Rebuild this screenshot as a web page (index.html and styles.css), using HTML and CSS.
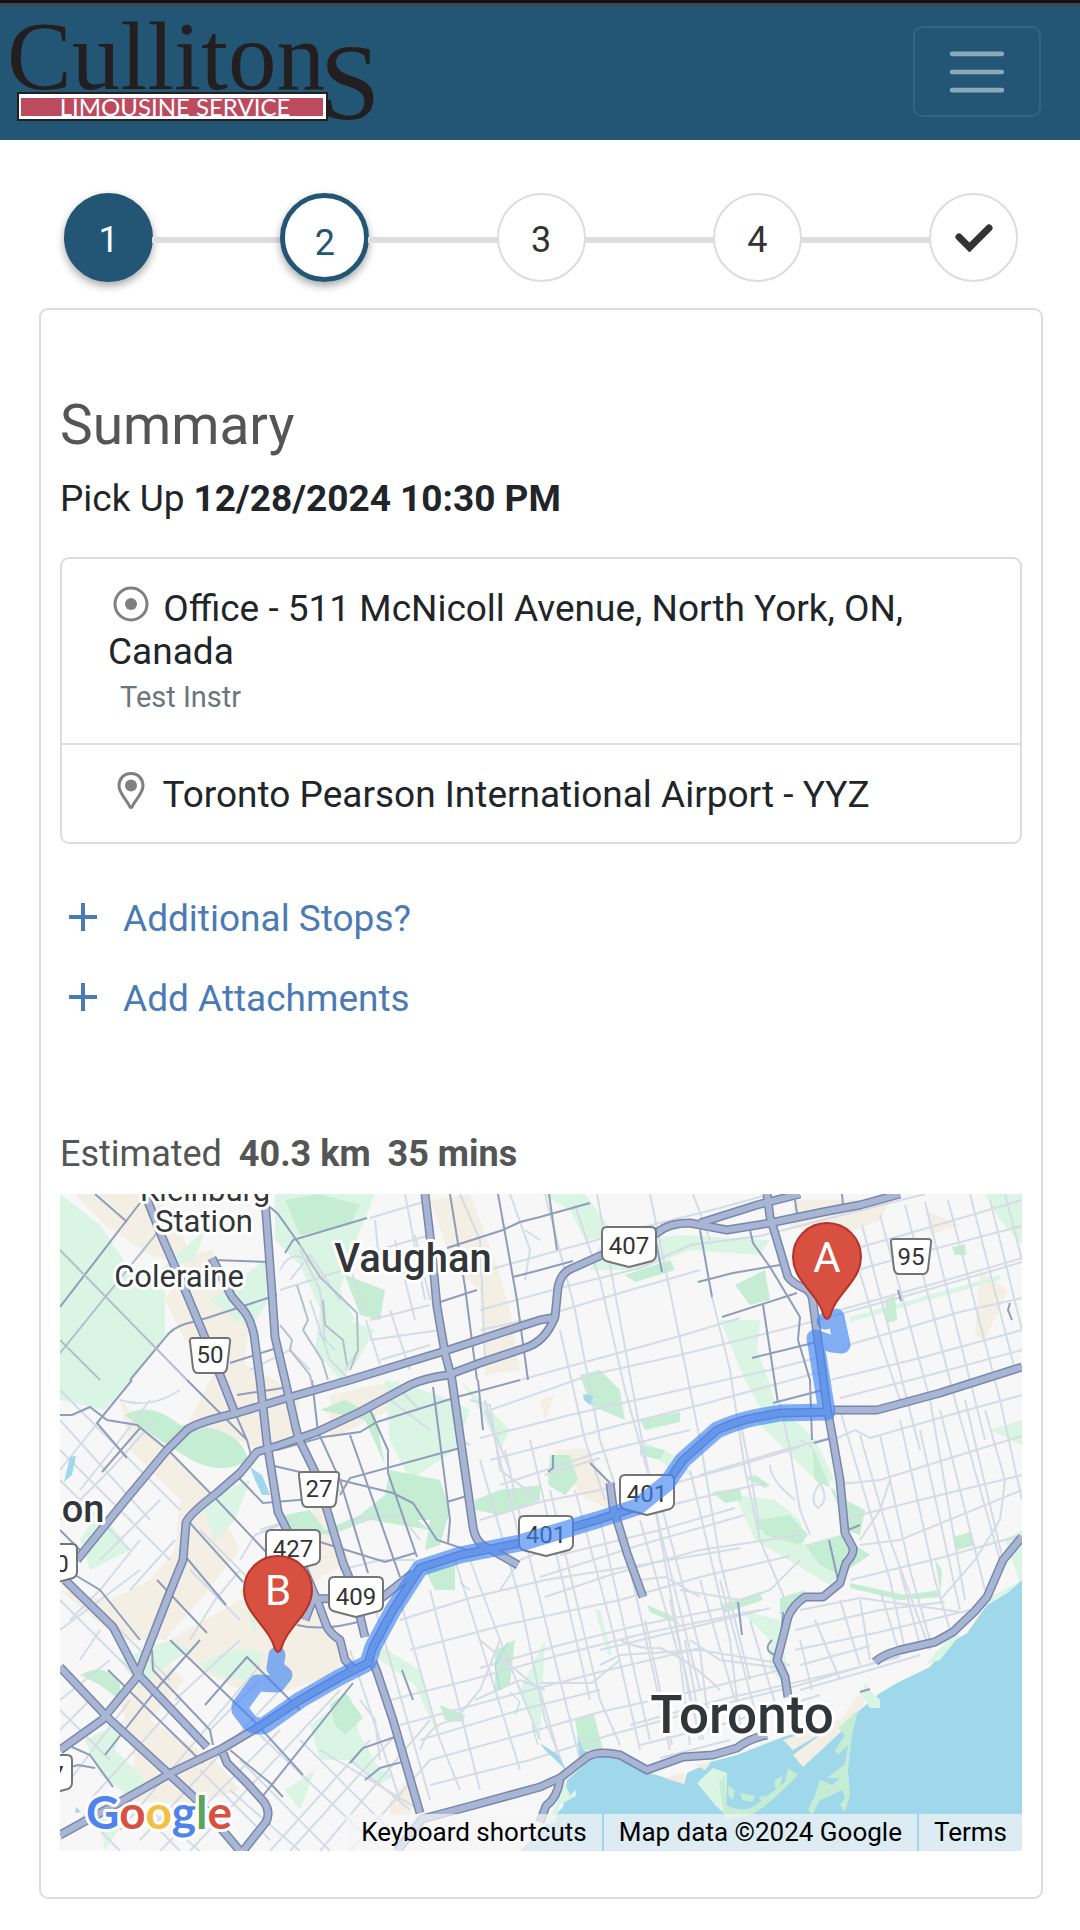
FILE: index.html
```html
<!DOCTYPE html>
<html lang="en">
<head>
  <meta charset="UTF-8">
  <meta name="viewport" content="width=device-width, initial-scale=1.0">
  <title>Cullitons Limousine Service</title>
  <link rel="stylesheet" href="styles.css">
</head>
<body>
  <header class="navbar">
    <a href="#" class="brand">
      <svg width="384" height="112" viewBox="0 15 384 112">
        <text class="logo-name" x="7" y="88">Culliton<tspan class="logo-s" x="320" y="118">S</tspan></text>
        <rect x="18" y="92" width="309" height="27" fill="#fff" stroke="#231f20" stroke-width="2"/>
        <rect x="21" y="97" width="302" height="18" fill="#bd4b5f"/>
        <text class="logo-tag" x="175" y="115" text-anchor="middle">LIMOUSINE SERVICE</text>
      </svg>
    </a>
    <button class="toggler" type="button" aria-label="Toggle navigation">
      <svg width="68" height="68" viewBox="0 0 30 30">
        <path d="M4 7h22M4 15h22M4 23h22" stroke="#8baab9" stroke-width="2" stroke-linecap="round"/>
      </svg>
    </button>
  </header>

  <nav class="steps">
    <a href="#" class="step done">1</a>
    <span class="line"></span>
    <a href="#" class="step current">2</a>
    <span class="line"></span>
    <a href="#" class="step">3</a>
    <span class="line"></span>
    <a href="#" class="step">4</a>
    <span class="line"></span>
    <a href="#" class="step" aria-label="Finish">
      <svg width="38" height="28" viewBox="0 0 38 28">
        <path d="M4 13L14.500 23.500L34 4" fill="none" stroke="#333" stroke-width="7" stroke-linejoin="miter" stroke-linecap="round"/>
      </svg>
    </a>
  </nav>

  <main class="card">
    <h1>Summary</h1>
    <p class="pickup">Pick Up <b>12/28/2024 10:30 PM</b></p>

    <ul class="stops">
      <li>
        <svg class="stop-icon" width="42" height="42" viewBox="0 0 42 42">
          <circle cx="21" cy="21" r="16" fill="none" stroke="#808080" stroke-width="3"/>
          <circle cx="21" cy="21" r="6" fill="#808080"/>
        </svg>
        Office - 511 McNicoll Avenue, North York, ON, Canada
        <small>Test Instr</small>
      </li>
      <li>
        <svg class="stop-icon" width="42" height="42" viewBox="0 0 42 42">
          <path d="M21 4.500C13.500 4.500 9 10 9 17C9 24 17 31.500 19.500 37C20.200 39 21.800 39 22.500 37C25 31.500 33 24 33 17C33 10 28.500 4.500 21 4.500Z" fill="none" stroke="#808080" stroke-width="3"/>
          <circle cx="21" cy="16.500" r="6" fill="#808080"/>
        </svg>
        Toronto Pearson International Airport - YYZ
      </li>
    </ul>

    <div class="actions">
      <a href="#">
        <svg width="28" height="28" viewBox="0 0 28 28"><path d="M14 0V28M0 14H28" stroke="#4a7bb5" stroke-width="4"/></svg>
        Additional Stops?
      </a>
      <a href="#">
        <svg width="28" height="28" viewBox="0 0 28 28"><path d="M14 0V28M0 14H28" stroke="#4a7bb5" stroke-width="4"/></svg>
        Add Attachments
      </a>
    </div>

    <p class="estimate">Estimated <b>40.3 km</b> <b>35 mins</b></p>

    <div class="map">
      <svg class="map-canvas" viewBox="60 1194 962 657">
        <defs>
          <path id="shield" d="M-22 -19H22Q27 -19 27 -14V9Q27 13 23 15Q12 18 0 21Q-12 18 -23 15Q-27 13 -27 9V-14Q-27 -19 -22 -19Z"/>
          <path id="plate" d="M-17 -17H17Q21 -17 20 -13L17 13Q16 18 12 18H-12Q-16 18 -17 13L-20 -13Q-21 -17 -17 -17Z"/>
          <path id="pin" d="M0 -96C-19 -96 -34 -81 -34 -62C-34 -38 -9 -26 -3 -3Q0 3 3 -3C9 -26 34 -38 34 -62C34 -81 19 -96 0 -96Z"/>
          <g id="highways">
            <path d="M145 1194L162 1237L185 1290L203 1333L222 1380L235 1413"/>
            <path d="M212 1258L232 1297L244 1311Q251 1320 254 1335L260 1380L267 1443L273 1480L278 1512L287 1530L317 1600L327 1627Q331 1634 340 1640L345 1660L352 1668"/>
            <path d="M265 1200L269 1253L273 1307L275 1337L285 1380L298 1437L315 1472L327 1510L343 1563L353 1587L365 1637"/>
            <path d="M60 1750L102 1720L137 1677L150 1643L168 1597L183 1560L186 1523Q188 1515 217 1493L240 1473L257 1452L280 1445L317 1432L360 1412L410 1385Q425 1378 448 1375L480 1363L525 1348Q545 1342 555 1317L558 1287Q561 1272 573 1268L602 1255L657 1233Q668 1223 690 1223L727 1230L770 1223L823 1212L860 1205L900 1194"/>
            <path d="M77 1560L123 1503L167 1450L187 1430Q195 1423 237 1413L287 1398L350 1380L448 1350L540 1320L552 1318"/>
            <path d="M65 1580L113 1627L137 1673L153 1690L207 1747"/>
            <path d="M223 1753L227 1763L247 1783L264 1802Q271 1812 266 1822L243 1851"/>
            <path d="M60 1667L108 1718L157 1763L197 1800L240 1851"/>
            <path d="M373 1662L377 1672L393 1720L420 1813M397 1851L422 1819L467 1807L540 1787L560 1778L587 1757Q598 1750 620 1755L647 1770L683 1757L713 1755L737 1748Q750 1738 767 1735M560 1780Q557 1798 546 1806L540 1822"/>
            <path d="M425 1194L432 1253L437 1307L445 1353L452 1380L463 1457L473 1527Q476 1545 490 1549L518 1565"/>
            <path d="M767 1194L770 1217L777 1240L788 1277Q793 1284 806 1289Q813 1294 813 1303L817 1333L827 1407L833 1440L840 1480L845 1533L853 1548Q854 1555 846 1563L840 1583L823 1597L805 1597Q793 1605 788 1617L783 1637L777 1660L785 1677L788 1697"/>
            <path d="M700 1223L757 1205L800 1194M610 1483L613 1507L627 1553L643 1597"/>
            <path d="M833 1410L877 1410L940 1393L1022 1367"/>
            <path d="M1022 1537L1003 1560L987 1597L975 1611L953 1632L935 1642L900 1650Q882 1655 875 1662"/>
            <path d="M305 1620L313 1599L383 1597L413 1573"/>
            <path d="M60 1835L120 1802L173 1772L223 1748L257 1728L300 1700L340 1677L368 1663L373 1647L393 1610L420 1568L460 1555L520 1543L597 1520L637 1507L667 1483L683 1460L717 1430Q735 1422 753 1418L780 1413L827 1412"/>
          </g>
        </defs>

        <rect x="60" y="1194" width="962" height="657" fill="#f7f7f7"/>

        <!-- industrial land -->
        <g fill="#f4efe4">
          <path d="M75 1194H150L175 1215L190 1255L212 1250L250 1310L245 1365L275 1380L300 1400L290 1440L260 1450L190 1420L215 1370L185 1340L165 1300L185 1265L150 1255L105 1225Z"/>
          <path d="M120 1400L180 1460L215 1500L240 1550L200 1600L165 1640L120 1640L60 1590L110 1600L150 1580L175 1550L180 1500L130 1450Z"/>
          <path d="M430 1200L470 1194L495 1260L510 1310L520 1370L485 1375L480 1290L455 1270Z"/>
          <path d="M435 1270L450 1350L430 1300ZM330 1395L400 1380L390 1410L330 1440Z"/>
          <path d="M170 1640L240 1600L300 1590L350 1655L330 1675L290 1690L240 1690L200 1670Z"/>
          <path d="M120 1700L165 1660L185 1680L150 1720L215 1760L240 1790L190 1805L120 1800L135 1760Z"/>
          <path d="M555 1450L585 1448L610 1485L610 1510L580 1495Z"/>
          <path d="M795 1200L890 1200L880 1220L830 1240L790 1225ZM980 1270L1008 1290L985 1340L975 1335Z"/>
          <path d="M390 1800L415 1770L410 1815L390 1815ZM320 1500L350 1560L300 1590L290 1545Z"/>
          <path d="M540 1400L555 1395L545 1420ZM925 1210L960 1225L930 1235Z"/>
        </g>

        <!-- parks and valleys -->
        <g fill="#daf5e4">
          <path d="M60 1194L100 1225L140 1285L165 1290L165 1335L130 1380L105 1410L60 1400Z"/>
          <path d="M160 1270L205 1230L195 1260ZM210 1300L265 1260L275 1290L250 1330Z"/>
          <path d="M275 1194H375L360 1230L340 1290L355 1320L330 1330L300 1265L275 1240Z"/>
          <path d="M320 1310L375 1330L355 1365L340 1380L315 1350Z"/>
          <path d="M100 1510L130 1550L90 1570L80 1540ZM200 1500L250 1480L235 1520L215 1540Z"/>
          <path d="M385 1380L440 1395L470 1410L455 1450L410 1480L390 1440ZM460 1380L490 1410L510 1430L500 1450L480 1410Z"/>
          <path d="M540 1194H585L615 1235L585 1240L570 1210ZM600 1245L680 1235L770 1240L760 1255L690 1250L640 1270L590 1270Z"/>
          <path d="M720 1320L760 1320L757 1350L770 1385L785 1440L770 1425L745 1380ZM755 1420L790 1415L815 1440L835 1480L820 1485Z"/>
          <path d="M850 1317L1000 1275V1280L850 1322Z"/>
          <path d="M735 1495L775 1500L800 1520L805 1545L850 1560L830 1585L805 1570L755 1540Z"/>
          <path d="M740 1610L780 1620L790 1690L770 1670L770 1640Z"/>
          <path d="M120 1660L170 1640L190 1650L160 1670L140 1690ZM200 1665Q240 1640 265 1655L245 1680L215 1675Z"/>
          <path d="M85 1740L125 1720L115 1750L145 1780L135 1800L100 1775ZM310 1725L350 1695L360 1735L380 1770L395 1775L380 1785L350 1760L320 1760Z"/>
          <path d="M370 1640L420 1670L440 1740L415 1685L380 1660ZM95 1800L125 1820L105 1850ZM240 1590L265 1570L255 1635ZM285 1790L315 1770L300 1810Z"/>
          <path d="M595 1610L600 1610L612 1655H608ZM985 1194H1022V1245L1000 1220ZM1005 1540L1022 1530V1590Z"/>
          <path d="M640 1440L670 1470L690 1475L685 1460ZM990 1430L1022 1420V1445ZM520 1690L545 1640L540 1740Z"/>
        </g>
        <g fill="#c5edd3">
          <path d="M125 1415Q150 1400 180 1425Q240 1425 248 1460Q225 1475 195 1462Q150 1435 125 1415Z"/>
          <path d="M285 1200L320 1194L360 1205L350 1225L300 1235ZM345 1275L385 1290L380 1320L360 1315Z"/>
          <path d="M345 1400L375 1415L385 1465L365 1420L320 1410ZM390 1470L440 1480L450 1510L440 1545L425 1550L430 1520L380 1520Z"/>
          <path d="M285 1515L310 1510L325 1530L360 1515L385 1495L430 1530L370 1520L330 1535L290 1530Z"/>
          <path d="M475 1500L500 1490L540 1485V1500L500 1515L475 1510ZM425 1570L455 1565L455 1590L435 1590Z"/>
          <path d="M625 1275L670 1260L675 1270L635 1282ZM735 1285L765 1270L770 1300L750 1305Z"/>
          <path d="M580 1375L600 1370L620 1390L625 1420L590 1405ZM640 1420L680 1412L680 1422L645 1430Z"/>
          <path d="M550 1455L570 1455L578 1480L565 1495L548 1485ZM640 1445L665 1450L660 1460L640 1455Z"/>
          <path d="M712 1492L740 1488L742 1500L725 1503ZM755 1520L790 1515L808 1535L800 1545L765 1535Z"/>
          <path d="M745 1478L755 1475L770 1485L765 1488ZM845 1500L865 1510L860 1535L845 1530ZM805 1545L840 1535L870 1555L840 1575L820 1565Z"/>
          <path d="M720 1605L760 1592L763 1600L725 1613ZM780 1598L805 1590L800 1605L780 1615ZM815 1480L835 1490L840 1510L812 1445Z"/>
          <path d="M850 1583L905 1595L940 1590L935 1560L942 1570L940 1597L900 1600L850 1588ZM953 1537L970 1532L975 1545L957 1550Z"/>
          <path d="M952 1247L965 1244L966 1255L955 1255ZM885 1300L895 1295L897 1320L887 1323Z"/>
          <path d="M80 1675Q105 1660 120 1685L120 1700L100 1685ZM330 1705L345 1692L363 1718L345 1735L335 1725ZM440 1705L465 1715L463 1722L445 1720Z"/>
          <path d="M575 1720L594 1714L603 1750H580ZM495 1650L515 1640L510 1685L495 1690ZM647 1605L675 1617L680 1625L650 1612Z"/>
        </g>

        <!-- local streets -->
        <g class="street">
          <path d="M470 1275L560 1250L640 1228L720 1208L770 1194M480 1310L560 1288L640 1268L690 1245L760 1236L850 1213L925 1194M480 1330L540 1317L620 1293L700 1270M520 1380L600 1358L680 1336L740 1318M490 1410L590 1375L680 1355L800 1325L920 1292L1022 1262"/>
          <path d="M850 1250L900 1236L1022 1200M850 1272L930 1250L1022 1226M840 1310L940 1282L1022 1258M848 1345L900 1330L960 1312L1022 1298M830 1380L920 1358L1022 1330M480 1438L570 1415L680 1390L770 1370L820 1357"/>
          <path d="M490 1460L540 1447L620 1425L700 1405L820 1372M840 1398L930 1375L1022 1350M500 1485L600 1452L690 1430M833 1440L855 1430L870 1438L960 1412L1022 1395M545 1475L600 1458M700 1475L780 1451L830 1438"/>
          <path d="M650 1490L740 1465L800 1447M840 1484L880 1480L960 1455L1022 1436M480 1520L540 1502L610 1488M650 1510L720 1493L765 1483M840 1520L920 1500L1022 1475M540 1577L640 1545L745 1515M545 1597L610 1575L700 1550L800 1535M560 1555L660 1530L735 1508"/>
          <path d="M860 1545L900 1540L1022 1490M850 1580L940 1558L1022 1535M400 1620L470 1598L545 1580L640 1565L740 1548M410 1650L500 1626L620 1600L700 1577L790 1556M600 1650L690 1628L770 1608M480 1668L560 1645L640 1625L740 1605"/>
          <path d="M800 1610L860 1598L960 1612M795 1630L880 1610L945 1602M795 1650L880 1632L970 1610M800 1665L870 1646M390 1700L470 1680L560 1655L650 1632L760 1610M400 1725L500 1698L600 1672L700 1648M430 1760L520 1735L600 1712L700 1690L780 1670"/>
          <path d="M430 1785L530 1760L610 1735L700 1710L800 1685L900 1655M540 1683H592L620 1660M420 1740L520 1710L600 1690M630 1725L720 1700L840 1672L900 1657M640 1745L720 1725L820 1695M660 1758L730 1740M800 1690L870 1670L920 1655"/>
          <path d="M480 1640L540 1690L560 1760M600 1665L620 1655L700 1650L790 1665M690 1640L720 1660L780 1668M455 1720L480 1690L500 1640"/>
        </g>
        <g class="street">
          <path d="M545 1194L575 1310L600 1440L615 1485M575 1205L600 1280L625 1390L650 1480L690 1700M597 1194L620 1320L640 1430L660 1530L700 1690M650 1194L680 1340L700 1440L720 1560L750 1680M693 1194L710 1240M712 1297L730 1370L745 1470L760 1540L785 1600"/>
          <path d="M740 1420L750 1470L760 1530M560 1330L585 1440L605 1500M480 1460L520 1600L545 1720L565 1770M505 1450L530 1560L560 1680L580 1760M530 1440L560 1570L590 1700M550 1490L600 1700L620 1745M575 1490L615 1640L640 1750M600 1520L650 1740"/>
          <path d="M628 1560L655 1680L670 1750M640 1520L680 1660L690 1745M660 1500L700 1650L710 1735M690 1470L730 1640L740 1725M670 1600L700 1740M700 1580L735 1700M720 1580L760 1730M645 1620L672 1745M685 1640L703 1740M750 1620L780 1720"/>
          <path d="M780 1403L790 1450L800 1510L810 1535M800 1440L812 1447M850 1240L880 1340L900 1400M862 1225L920 1450M880 1215L930 1400L965 1600M905 1205L955 1400L1000 1560M925 1202L985 1440M948 1200L1000 1400L1022 1500M970 1194L1015 1370M990 1200L1022 1330M1005 1194L1022 1260"/>
          <path d="M840 1410L890 1580L905 1650M860 1435L890 1540L930 1650M880 1435L910 1570L930 1640M900 1420L935 1580L950 1630M920 1430L960 1610M940 1410L985 1590M965 1400L1003 1560M985 1410L1005 1480L1000 1520L975 1560L940 1600M860 1600L870 1660M880 1590L900 1655M900 1570L920 1645M840 1600L860 1665M815 1620L840 1680M800 1640L812 1690M485 1400L520 1540"/>
          <path d="M820 1483Q808 1500 818 1508Q830 1500 820 1483M770 1465Q770 1480 795 1500M860 1540L880 1510L890 1480M620 1640Q640 1650 660 1648Q690 1660 720 1690M680 1590L740 1600L770 1590L800 1560M640 1580L665 1577L700 1597"/>
          <path d="M370 1590L430 1800M400 1600L440 1740L460 1790M430 1590L480 1790M455 1560L520 1770M470 1560L500 1640L540 1740M350 1650L400 1800M500 1590L520 1560L545 1550M360 1700L375 1720L380 1760M460 1720Q430 1720 420 1750M475 1700L520 1680L545 1690"/>
        </g>
        <g class="street">
          <path d="M60 1390L120 1450L180 1510M60 1420L150 1520M60 1450L170 1560M60 1480L130 1550M80 1490L120 1440L150 1400M60 1470L100 1420M60 1520L110 1470L155 1420M100 1560L160 1500M130 1590L175 1540M70 1620L100 1590L140 1540M200 1530L270 1600M190 1570L240 1620M240 1570L215 1600L190 1640"/>
          <path d="M60 1600L160 1700M90 1600L170 1680M60 1630L140 1570M80 1660L100 1630M60 1700L110 1660M60 1710L110 1760M70 1780L130 1700M90 1800L180 1700M120 1830L260 1665M140 1840L280 1690M160 1851L280 1730M190 1851L340 1690M210 1730L260 1680M175 1700L240 1640M270 1851L370 1740M290 1851L400 1730M320 1851L430 1720M350 1851L430 1760"/>
          <path d="M260 1735L370 1840M240 1760L330 1851M200 1770L270 1840M230 1790L300 1851M300 1740L400 1840M320 1750L420 1810M350 1760L410 1810M130 1800L180 1851M90 1820L120 1851M150 1810L200 1851M60 1840L100 1800M60 1730L90 1700"/>
          <path d="M290 1280L310 1255L340 1300M280 1290L350 1268L365 1310M280 1270Q295 1240 320 1275M300 1250L320 1290M310 1300L330 1360L350 1380M320 1290L325 1340M357 1313L358 1350L345 1370M366 1320L380 1365M375 1220L378 1250L430 1235M370 1218L430 1200M405 1194L425 1300M390 1310L410 1370M370 1320L430 1305M370 1340L440 1330M380 1360L430 1345M395 1240L415 1320M415 1235L430 1300M460 1194L480 1240L485 1360M510 1194L530 1250L525 1280M525 1230L540 1240"/>
          <path d="M300 1490L320 1500L340 1490M260 1530L290 1520M240 1560L255 1535L280 1525M350 1520L400 1515L420 1540M340 1570L380 1560L415 1560M390 1400L430 1430M400 1390L420 1410M455 1400L460 1440L470 1445M470 1400L490 1405L500 1470L540 1500M485 1410L510 1470M120 1400Q150 1410 180 1390M250 1370L290 1350L310 1370"/>
        </g>

        <!-- water -->
        <g fill="#a0d8eb">
          <path d="M1022 1580L1007 1593L987 1605L967 1633L947 1645L930 1667L897 1683L880 1693L860 1710L840 1720L783 1737L757 1747L737 1755L710 1762L687 1773L684 1784L673 1780L650 1773L623 1758L607 1755L590 1760L567 1780L563 1807L550 1820L520 1851H1022Z"/>
          <path d="M70 1457L76 1456L72 1475L64 1482ZM250 1467L262 1475L270 1495L262 1495L255 1480ZM76 1807L81 1812L75 1813ZM583 1394L593 1396L590 1405L584 1400Z"/>
          <path d="M540 1743L558 1755L566 1770L545 1750ZM577 1735L583 1750L597 1755L580 1760Z"/>
        </g>
        <g fill="none" stroke="#a0d8eb" stroke-width="1">
          <path d="M508 1642L495 1665L500 1690M510 1692L520 1702L515 1715M532 1725L538 1745M460 1583L470 1590M318 1333L335 1350"/>
        </g>
        <path d="M783 1740L840 1720L862 1690L864 1705L845 1728L803 1767L793 1755L830 1728L793 1750Z" fill="#f4efe4"/>
        <path d="M664 1778L685 1772L684 1784ZM695 1765L711 1762L705 1770Z" fill="#f4ebe4"/>
        <path d="M697 1783L713 1768L727 1773L726 1815L715 1805Z" fill="#daf5e4"/>
        <path d="M563 1780L570 1795L576 1790V1796L560 1805L555 1822L545 1825L556 1805Z" fill="#daf5e4"/>
        <path d="M865 1682L870 1690L880 1700V1708L870 1708L862 1695Z" fill="#daf5e4"/>
        <g fill="#c5edd3">
          <path d="M719 1783L725 1775L726 1805Q745 1815 760 1802L785 1782L788 1768L798 1775L785 1788Q765 1808 750 1815L725 1820Z"/>
          <path d="M728 1785L735 1790L733 1800L728 1795ZM740 1793L755 1796L752 1802L742 1800ZM759 1797L768 1795L762 1801ZM775 1780L782 1776L780 1788L775 1788Z"/>
          <path d="M838 1728L858 1710L852 1735L848 1770L850 1795L845 1812L840 1805L845 1798L842 1790L828 1797L820 1800L812 1815L808 1810L815 1795L820 1780L832 1785L840 1778L827 1778L845 1764L848 1745L838 1755L835 1750L845 1735Z"/>
        </g>
        <path d="M947 1640L960 1635L940 1660L925 1665ZM1022 1580L1007 1593L985 1605L975 1620L990 1597Z" fill="#daf5e4"/>

        <!-- arterial roads -->
        <g class="arterial">
          <path d="M95 1194L127 1222M60 1307L140 1203M130 1380L165 1338Q172 1328 185 1324L207 1318L277 1295M213 1260L270 1262M270 1207L278 1214L300 1245M285 1253L293 1240L367 1218M450 1194L465 1287L477 1380M498 1194L517 1300L528 1380"/>
          <path d="M447 1248L503 1230L520 1222L540 1217L590 1203M440 1302L477 1290M513 1277L540 1270L573 1261M230 1363L280 1347"/>
          <path d="M60 1415L72 1415L90 1407L107 1420L137 1425L170 1452L217 1500L267 1553M187 1380L247 1440M235 1413L247 1440L251 1455M132 1380L97 1423L127 1458M102 1472L140 1428M190 1523L243 1582M157 1580L207 1633M180 1550L226 1605M238 1477L263 1503L323 1498"/>
          <path d="M312 1380L318 1432L340 1480L368 1573M370 1410L388 1450L388 1473L417 1557M350 1435L400 1577M277 1450L323 1437L360 1432L377 1422L457 1397L520 1380M340 1480L393 1493L413 1503L437 1540L473 1552M340 1495L350 1478L460 1448"/>
          <path d="M433 1387L450 1520L448 1543M320 1542L385 1562L415 1553M447 1502L470 1495M478 1380L483 1430M237 1395L283 1388M270 1465L300 1472"/>
          <path d="M170 1640L253 1720L303 1775M152 1650L153 1670L210 1730L213 1745M108 1670L203 1763M200 1640L160 1685L105 1755M72 1747L90 1755L113 1787M60 1770L78 1765L95 1768M230 1750L270 1783L283 1797M353 1683L262 1797M60 1530L85 1555M75 1575L100 1590L140 1640"/>
          <path d="M205 1705L247 1657L300 1710M350 1763L363 1748L395 1737M365 1780L380 1768L402 1762M402 1670L413 1700M297 1625Q325 1632 365 1620"/>
          <path d="M549 1194L557 1250M700 1230L712 1297M655 1237L662 1272M722 1317L797 1293M698 1282L733 1273L780 1265M763 1305L778 1403M752 1358L817 1342M750 1230L753 1243L770 1267L800 1317L798 1340L810 1380L812 1440M773 1403L823 1390M814 1443L832 1438"/>
          <path d="M590 1463L610 1483M553 1455V1468L548 1472M738 1602L742 1635M829 1540L838 1580M795 1200L798 1220M898 1290L901 1301M1010 1303L1008 1310L1012 1320M848 1530L860 1525M783 1612L780 1650M772 1640Q762 1650 775 1655M842 1194L843 1205M860 1692L870 1689"/>
        </g>
        <g class="arterial faded">
          <path d="M60 1250L187 1380M60 1353L157 1233M60 1340L100 1380M300 1245L320 1277L357 1313L358 1350L350 1370M280 1325L292 1340L290 1350L310 1375L312 1385M297 1285L308 1320L303 1330L322 1360L328 1380M323 1300L325 1325L343 1340L347 1365"/>
        </g>

        <use href="#highways" class="casing"/>
        <use href="#highways" class="highway"/>

        <!-- road numbers -->
        <g class="sign">
          <use href="#plate" x="210" y="1355"/><text x="210" y="1363">50</text>
          <use href="#plate" x="911" y="1256"/><text x="911" y="1265">95</text>
          <use href="#plate" x="319" y="1489"/><text x="319" y="1497">27</text>
          <use href="#shield" x="629" y="1246"/><text x="629" y="1254">407</text>
          <use href="#shield" x="293" y="1549"/><text x="293" y="1557">427</text>
          <use href="#shield" x="356" y="1596"/><text x="356" y="1605">409</text>
          <use href="#shield" x="647" y="1494"/><text x="647" y="1502">401</text>
          <use href="#shield" x="546" y="1535"/><text x="546" y="1543">401</text>
          <use href="#shield" x="50" y="1563"/><text x="62" y="1572">0</text>
          <use href="#shield" x="45" y="1774"/><text x="57" y="1783">7</text>
        </g>

        <!-- route -->
        <path class="route" d="M825 1321L836 1317L842 1345L832 1344L815 1338L827 1412L780 1413L753 1418Q735 1422 717 1430L683 1460L667 1483L637 1507L597 1520L520 1543L460 1555L420 1568L393 1610L373 1647L368 1663L340 1677L300 1700L265 1725Q257 1728 250 1723L240 1710L240 1706L257 1683L277 1684L284 1675L275 1668L277 1655"/>

        <g class="place">
          <text x="205" y="1201" font-size="31">Kleinburg</text>
          <text x="204" y="1232" font-size="31">Station</text>
          <text x="179" y="1287" font-size="31">Coleraine</text>
          <g class="city">
            <text x="413" y="1272" font-size="40">Vaughan</text>
            <text x="83" y="1522" font-size="38">on</text>
            <text x="742" y="1733" font-size="53">Toronto</text>
          </g>
        </g>

        <g class="marker">
          <use href="#pin" x="827" y="1319"/><text x="827" y="1272">A</text>
          <use href="#pin" x="278" y="1652"/><text x="278" y="1605">B</text>
        </g>

        <text class="google" x="86" y="1829"><tspan fill="#4f83ee">G</tspan><tspan fill="#d85040">o</tspan><tspan fill="#f2bf42">o</tspan><tspan fill="#4f83ee">g</tspan><tspan fill="#58a55c">l</tspan><tspan fill="#d85040">e</tspan></text>
      </svg>
      <div class="credits">
        <button type="button">Keyboard shortcuts</button>
        <span>Map data ©2024 Google</span>
        <a href="#">Terms</a>
      </div>
    </div>
  </main>
</body>
</html>
```
FILE: styles.css
```css
* {
  box-sizing: border-box;
  margin: 0;
  padding: 0;
}

body {
  font-family: Roboto, "Helvetica Neue", Arial, sans-serif;
  font-size: 37px;
  line-height: 43px;
  color: #212529;
  background-color: #fff;
}

a {
  color: inherit;
  text-decoration: none;
}

.navbar {
  display: flex;
  justify-content: space-between;
  align-items: center;
  height: 140px;
  padding-right: 39px;
  background-color: #235674;
  border-top: 3px solid #101416;
  box-shadow: inset 0 3px #45484a;
}

.brand svg {
  display: block;
}

.logo-name {
  font-family: "Liberation Serif", serif;
  font-size: 97px;
  fill: #231f20;
}

.logo-s {
  font-size: 108px;
}

.logo-tag {
  font-family: Lato, sans-serif;
  font-size: 24px;
  fill: #fff;
}

.toggler {
  display: flex;
  align-items: center;
  justify-content: center;
  width: 128px;
  height: 91px;
  background: none;
  border: 2px solid #34647f;
  border-radius: 9px;
}

.steps {
  display: flex;
  align-items: center;
  padding: 53px 62px 0 64px;
}

.step {
  display: flex;
  justify-content: center;
  width: 89px;
  height: 89px;
  border: 2px solid #ddd;
  border-radius: 50%;
  color: #333;
  font-size: 36px;
  line-height: 90px;
}

.step svg {
  margin-top: 29px;
}

.step.done {
  background-color: #235674;
  border-color: #235674;
  color: #fff;
  box-shadow: 0 4px 9px rgba(0,0,0,0.35);
}

.step.current {
  border: 5px solid #235674;
  color: #235674;
  box-shadow: 0 4px 9px rgba(0,0,0,0.35);
}

.line {
  flex: 1;
  height: 6px;
  margin: 5px -1px 0;
  background-color: #ddd;
}

.card {
  margin: 26px 37px 31px 39px;
  padding: 84px 19px 46px;
  border: 2px solid #ddd;
  border-radius: 9px;
}

h1 {
  font-size: 55px;
  font-weight: 400;
  line-height: 62px;
  color: #555;
}

.pickup {
  margin-top: 21px;
}

.stops {
  margin-top: 37px;
  list-style: none;
  border: 2px solid #ddd;
  border-radius: 9px;
}

.stops li {
  padding: 24px 46px 26px;
}

.stops li + li {
  border-top: 2px solid #ddd;
}

.stop-icon {
  margin: 0 2px -4px 2px;
}

.stops small {
  display: block;
  padding: 4px 12px 0;
  font-size: 29px;
  line-height: 40px;
  color: #6c757d;
}

.actions {
  display: flex;
  flex-direction: column;
  align-items: flex-start;
  gap: 37px;
  margin-top: 53px;
  color: #4a7bb5;
}

.actions a {
  display: flex;
  align-items: center;
  gap: 26px;
  padding-left: 9px;
}

.actions svg {
  margin-bottom: 4px;
}

.estimate {
  margin-top: 113px;
  font-size: 36px;
  color: #555;
}

.estimate b {
  margin-left: 8px;
}

.map {
  position: relative;
  margin-top: 18px;
}

.map-canvas {
  display: block;
  width: 100%;
}

.street {
  fill: none;
  stroke: #d5dce5;
  stroke-width: 2;
}

.arterial {
  fill: none;
  stroke: #8f9dbd;
  stroke-width: 2;
}

.faded {
  stroke: #b3bfcb;
}

.casing,
.highway {
  fill: none;
  stroke-linejoin: round;
}

.casing {
  stroke: #7886af;
  stroke-width: 9;
}

.highway {
  stroke: #a9b6d3;
  stroke-width: 6;
}

.sign {
  fill: #fff;
  stroke: #757575;
  stroke-width: 2;
}

.sign text {
  font-size: 24px;
  text-anchor: middle;
  fill: #333;
  stroke: none;
}

.route {
  fill: none;
  stroke: #4285f4;
  stroke-width: 17;
  stroke-linecap: round;
  stroke-linejoin: round;
  opacity: 0.65;
}

.place {
  text-anchor: middle;
  fill: #333639;
  stroke: #fff;
  stroke-width: 6;
  stroke-linejoin: round;
  paint-order: stroke;
}

.city {
  font-weight: 500;
}

.marker {
  fill: #d85040;
  stroke: #b3332a;
  stroke-width: 2;
}

.marker text {
  font-size: 42px;
  text-anchor: middle;
  fill: #fff;
  stroke: none;
}

.google {
  font-family: Lato, sans-serif;
  font-size: 46px;
  font-weight: 700;
  stroke: #fff;
  stroke-width: 6;
  stroke-linejoin: round;
  paint-order: stroke;
}

.credits {
  position: absolute;
  right: 0;
  bottom: 0;
  display: flex;
  gap: 2px;
  font-size: 26px;
  line-height: 37px;
  color: #000;
}

.credits > * {
  padding: 0 15px;
  background-color: rgba(245,245,245,0.7);
}

.credits button {
  border: 0;
  font: inherit;
  color: inherit;
}
```
